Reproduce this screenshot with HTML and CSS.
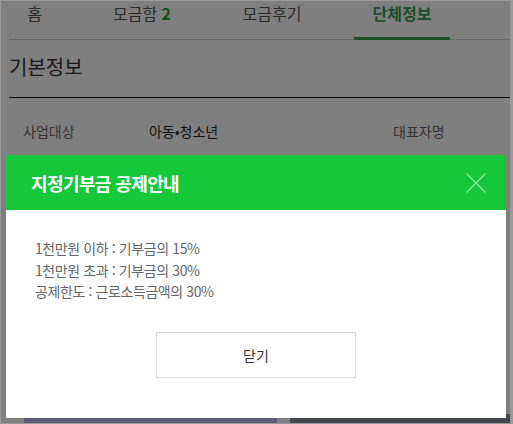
FILE: index.html
```html
<!DOCTYPE html>
<html lang="ko">
<head>
<meta charset="UTF-8">
<title>단체정보</title>
<meta name="viewport" content="width=device-width, initial-scale=1.0">
<link rel="stylesheet" href="styles.css">
</head>
<body>

<div class="page">
    <nav class="tabs">
        <a class="tab tab-home">홈</a>
        <a class="tab">모금함 <em>2</em></a>
        <a class="tab">모금후기</a>
        <a class="tab on">단체정보</a>
    </nav>

    <section class="info">
        <h2>기본정보</h2>
        <div class="info-row">
            <span class="label">사업대상</span>
            <span class="value">아동•청소년</span>
            <span class="label">대표자명</span>
        </div>
    </section>

    <div class="gallery">
        <div class="thumb thumb-a"></div>
        <div class="thumb thumb-b"></div>
    </div>
</div>

<div class="dim"></div>

<div class="modal">
    <div class="modal-head">
        <h3>지정기부금 공제안내</h3>
        <button class="close" aria-label="닫기">
            <svg width="20" height="20" viewBox="0 0 20 20">
                <path d="M0.5 0.5 L19.5 19.5 M19.5 0.5 L0.5 19.5" stroke="#8eeea2" stroke-width="1.2" fill="none"/>
            </svg>
        </button>
    </div>
    <div class="modal-body">
        <ul class="guide">
            <li>1천만원 이하 : 기부금의 15%</li>
            <li>1천만원 초과 : 기부금의 30%</li>
            <li>공제한도 : 근로소득금액의 30%</li>
        </ul>
        <button class="btn-close">닫기</button>
    </div>
</div>

</body>
</html>
```

FILE: styles.css
```css
* {
    box-sizing: border-box;
}
body {
    margin: 0;
    font-family: "Noto Sans CJK KR", "Noto Sans", sans-serif;
    background: #fff;
    color: #333;
    overflow: hidden;
}
.page {
    padding-left: 9px;
    height: 424px;
    overflow: hidden;
}
.tabs {
    display: flex;
    gap: 34px;
    height: 40px;
    border-bottom: 1px solid #d6d6d6;
}
.tab {
    width: 96px;
    text-align: center;
    font-size: 16px;
    line-height: 26px;
    color: #555;
    border-bottom: 3px solid transparent;
    height: 40px;
    margin-bottom: -1px;
    white-space: nowrap;
}
.tab-home {
    width: 51px;
}
.tab em {
    font-style: normal;
    font-weight: bold;
    color: #1e9c40;
}
.tab.on {
    color: #3a9a55;
    font-weight: bold;
    border-bottom-color: #3aa35a;
}
.info h2 {
    margin: 13px 0 0;
    font-size: 20px;
    font-weight: normal;
    line-height: 28px;
    padding-bottom: 16px;
    border-bottom: 1px solid #111;
}
.info-row {
    display: grid;
    grid-template-columns: 126px 244px auto;
    padding: 23px 0 0 14px;
    font-size: 14px;
    line-height: 20px;
}
.info-row .label {
    color: #666;
}
.info-row .value {
    color: #222;
}
.gallery {
    display: flex;
    gap: 13px;
    margin: 273px 0 0 15px;
}
.thumb {
    height: 12px;
}
.thumb-a {
    width: 253px;
    background: #b6bce6;
}
.thumb-b {
    width: 220px;
    background: #8c8c9e;
}
.dim {
    position: fixed;
    inset: 0;
    background: rgba(0, 0, 0, 0.5);
    border: 1px solid #9a9a9a;
    border-right-width: 3px;
}
.modal {
    position: fixed;
    left: 6px;
    top: 155px;
    width: 500px;
    background: #fff;
}
.modal-head {
    display: flex;
    align-items: center;
    justify-content: space-between;
    height: 55px;
    padding: 0 20px 0 25px;
    background: #15c83a;
}
.modal-head h3 {
    margin: 0;
    color: #fff;
    font-size: 18px;
    font-weight: bold;
    letter-spacing: -0.6px;
}
.close {
    border: none;
    background: none;
    padding: 0;
    width: 20px;
    height: 20px;
    display: flex;
}
.modal-body {
    padding: 28px 29px 40px;
}
.guide {
    list-style: none;
    margin: 0;
    padding: 0;
    font-size: 14px;
    line-height: 21.5px;
    letter-spacing: -0.4px;
    color: #666;
}
.btn-close {
    display: block;
    width: 200px;
    height: 46px;
    margin: 29px auto 0;
    border: 1px solid #dcdcdc;
    background: #fff;
    font-family: inherit;
    font-size: 14px;
    color: #333;
}
```
